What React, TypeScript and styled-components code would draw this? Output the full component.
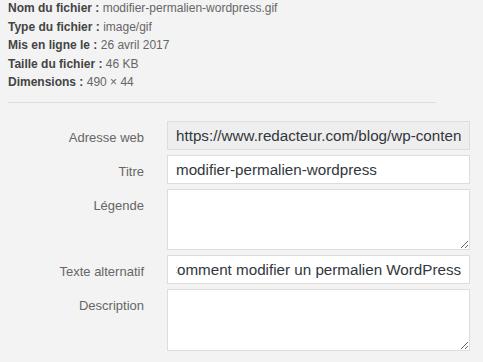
import * as React from "react"
import styled, { createGlobalStyle } from "styled-components"

const GlobalStyle = createGlobalStyle`
  html, body {
    margin: 0;
    padding: 0;
    background: #f3f3f3;
  }
  body {
    font-family: "Liberation Sans", Arial, sans-serif;
    color: #444;
  }
`

const Page = styled.div`
  width: 483px;
  height: 362px;
  overflow: hidden;
  background: #f3f3f3;
`

const Details = styled.div`
  padding: 0 0 0 8px;
  margin-top: -1px;
`

const InfoLine = styled.div`
  font-size: 12px;
  line-height: 18.5px;
  color: #666;
  white-space: nowrap;

  strong {
    color: #444;
    font-weight: bold;
  }
`

const Divider = styled.hr`
  border: 0;
  border-top: 1px solid #ddd;
  margin: 10px 0 0 0;
  width: 428px;
`

const Form = styled.div`
  display: flex;
  flex-direction: column;
  gap: 5px;
  padding-top: 18px;
`

const Row = styled.label`
  display: flex;
  align-items: flex-start;
`

const Label = styled.span`
  width: 144px;
  flex: none;
  text-align: right;
  padding-top: 9px;
  margin-right: 23px;
  font-size: 13px;
  line-height: 16px;
  color: #666;
`

const TextInput = styled.input<{ $readOnly?: boolean }>`
  box-sizing: border-box;
  width: 303px;
  height: 29px;
  margin: 0;
  padding: 0 8px;
  border: 1px solid #ddd;
  border-radius: 0;
  background: ${(p) => (p.$readOnly ? "#eee" : "#fff")};
  font-family: "Liberation Sans", Arial, sans-serif;
  font-size: 15.2px;
  color: #32373c;
  outline: none;
`

const TextArea = styled.textarea<{ $h: number }>`
  box-sizing: border-box;
  width: 303px;
  height: ${(p) => p.$h}px;
  margin: 0;
  padding: 6px 8px;
  border: 1px solid #ddd;
  border-radius: 0;
  background: #fff;
  font-family: "Liberation Sans", Arial, sans-serif;
  font-size: 15.2px;
  color: #32373c;
  outline: none;
  resize: vertical;
`

const ScrolledInput = ({ value }: { value: string }) => {
  const ref = React.useRef<HTMLInputElement>(null)
  React.useEffect(() => {
    if (ref.current) ref.current.scrollLeft = ref.current.scrollWidth
  }, [])
  return <TextInput ref={ref} defaultValue={value} />
}

const info = [
  ["Nom du fichier :", "modifier-permalien-wordpress.gif"],
  ["Type du fichier :", "image/gif"],
  ["Mis en ligne le :", "26 avril 2017"],
  ["Taille du fichier :", "46 KB"],
  ["Dimensions :", "490 × 44"],
]

const App = () => (
  <Page>
    <GlobalStyle />
    <Details>
      {info.map(([k, v]) => (
        <InfoLine key={k}>
          <strong>{k}</strong> {v}
        </InfoLine>
      ))}
      <Divider />
    </Details>
    <Form>
      <Row>
        <Label>Adresse web</Label>
        <TextInput $readOnly readOnly defaultValue="https://www.redacteur.com/blog/wp-content/uploads/2017/04/modifier-permalien-wordpress.gif" />
      </Row>
      <Row>
        <Label>Titre</Label>
        <TextInput defaultValue="modifier-permalien-wordpress" />
      </Row>
      <Row>
        <Label>Légende</Label>
        <TextArea $h={61} />
      </Row>
      <Row>
        <Label>Texte alternatif</Label>
        <ScrolledInput value="Comment modifier un permalien WordPress" />
      </Row>
      <Row>
        <Label>Description</Label>
        <TextArea $h={62} />
      </Row>
    </Form>
  </Page>
)

export default App
